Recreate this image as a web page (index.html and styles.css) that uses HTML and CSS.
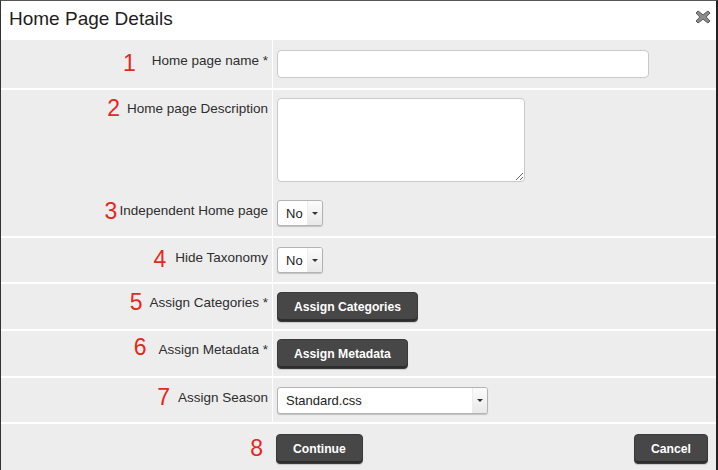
FILE: index.html
```html
<!DOCTYPE html>
<html lang="en">
<head>
<meta charset="utf-8">
<title>Home Page Details</title>
<link rel="stylesheet" href="styles.css">
</head>
<body>
<div class="dialog">
  <div class="header">
    <h1 class="title">Home Page Details</h1>
    <svg class="close" width="16" height="14" viewBox="0 0 16 14" aria-label="Close">
      <path d="M3 1 L8 4.8 L13 1 L15 3 L11.2 7 L15 11 L13 13 L8 9.2 L3 13 L1 11 L4.8 7 L1 3 Z" fill="#8c8c8c" stroke="#5a5a5a" stroke-width="1" stroke-linejoin="round"/>
    </svg>
  </div>

  <div class="row row-name">
    <div class="label"><span class="num n1">1</span><span class="text">Home page name *</span></div>
    <div class="field"><input class="input" type="text"></div>
  </div>

  <div class="row row-desc no-sep">
    <div class="label"><span class="num n2">2</span><span class="text">Home page Description</span></div>
    <div class="field"><textarea class="textarea"></textarea></div>
  </div>

  <div class="row row-indep">
    <div class="label"><span class="num n3">3</span><span class="text">Independent Home page</span></div>
    <div class="field">
      <div class="select select-sm"><span class="select-value">No</span><span class="select-arrow"></span></div>
    </div>
  </div>

  <div class="row row-tax">
    <div class="label"><span class="num n4">4</span><span class="text">Hide Taxonomy</span></div>
    <div class="field">
      <div class="select select-sm"><span class="select-value">No</span><span class="select-arrow"></span></div>
    </div>
  </div>

  <div class="row row-btn">
    <div class="label"><span class="num n5">5</span><span class="text">Assign Categories *</span></div>
    <div class="field"><button class="btn">Assign Categories</button></div>
  </div>

  <div class="row row-btn">
    <div class="label"><span class="num n6">6</span><span class="text">Assign Metadata *</span></div>
    <div class="field"><button class="btn">Assign Metadata</button></div>
  </div>

  <div class="row row-season">
    <div class="label"><span class="num n7">7</span><span class="text">Assign Season</span></div>
    <div class="field">
      <div class="select select-lg"><span class="select-value">Standard.css</span><span class="select-arrow"></span></div>
    </div>
  </div>

  <div class="footer">
    <div class="footer-lead"><span class="num n8">8</span></div>
    <button class="btn btn-continue">Continue</button>
    <button class="btn btn-cancel">Cancel</button>
  </div>
</div>
</body>
</html>
```

FILE: styles.css
```css
html, body {
  margin: 0;
  padding: 0;
  background: #fff;
}

.dialog {
  width: 718px;
  height: 470px;
  box-sizing: border-box;
  border-left: 1px solid #333;
  border-right: 2px solid #222;
  border-top: 1px solid #555;
  background: #ededed;
  overflow: hidden;
  font-family: "Liberation Sans", Arial, sans-serif;
  color: #333;
}

.header {
  height: 39px;
  box-sizing: border-box;
  background: #fff;
  display: flex;
  justify-content: space-between;
  align-items: flex-start;
  padding: 7px 5px 0 8px;
}

.title {
  margin: 0;
  font-size: 19px;
  line-height: 22px;
  font-weight: normal;
  color: #1e1e1e;
}

.close {
  margin-top: 2px;
  display: block;
}

.row {
  --pt: 10px;
  --pb: 10px;
  display: flex;
  border-bottom: 2px solid #fff;
}

.row.no-sep {
  border-bottom: 0;
}

.row-name { --pt: 10px; --pb: 10px; }
.row-desc { --pt: 8px; --pb: 8px; }
.row-indep { --pt: 10px; --pb: 10px; }
.row-tax { --pt: 9px; --pb: 9px; }
.row-btn { --pt: 8px; --pb: 7px; }
.row-season { --pt: 9px; --pb: 8px; }

.label {
  width: 272px;
  flex: none;
  box-sizing: border-box;
  border-right: 1px solid #fff;
  padding: calc(var(--pt) + 3px) 4px 0 0;
  display: flex;
  justify-content: flex-end;
  align-items: baseline;
}

.text {
  font-size: 13.5px;
  line-height: 16px;
  color: #2e2e2e;
}

.num {
  font-family: "Liberation Sans", Arial, sans-serif;
  font-size: 23px;
  line-height: 9px;
  color: #e4281d;
  position: relative;
}

.n1 { margin-right: 16px; top: 6px; }
.n2 { margin-right: 7px; top: 3px; }
.n3 { margin-right: 2px; top: 4px; }
.n4 { margin-right: 9px; top: 5px; }
.n5 { margin-right: 7px; top: 3px; }
.n6 { margin-right: 12px; top: 1px; }
.n7 { margin-right: 8px; top: 3px; }
.n8 { margin-right: 10px; line-height: 23px; top: -1px; }

.field {
  flex: 1;
  padding: var(--pt) 0 var(--pb) 4px;
  display: flex;
  align-items: flex-start;
}

.input {
  display: block;
  width: 372px;
  height: 28px;
  box-sizing: border-box;
  margin: 0;
  border: 1px solid #c9c9c9;
  border-radius: 4px;
  background: #fff;
  font: 13px "Liberation Sans", Arial, sans-serif;
}

.textarea {
  display: block;
  width: 248px;
  height: 84px;
  box-sizing: border-box;
  margin: 0;
  border: 1px solid #c9c9c9;
  border-radius: 4px;
  background: #fff;
  font: 13px "Liberation Sans", Arial, sans-serif;
}

.select {
  display: inline-flex;
  box-sizing: border-box;
  border: 1px solid #b3b3b3;
  border-radius: 3px;
  background: #fff;
  box-shadow: 0 1px 1px rgba(0, 0, 0, 0.18);
  font-size: 13px;
  color: #222;
  overflow: hidden;
}

.select-sm {
  width: 46px;
  height: 26px;
}

.select-lg {
  width: 211px;
  height: 27px;
}

.select-value {
  flex: 1;
  padding-left: 8px;
  display: flex;
  align-items: center;
}

.select-arrow {
  width: 14px;
  flex: none;
  background: linear-gradient(#fbfbfb, #e9e9e9);
  border-left: 1px solid #ececec;
  display: flex;
  align-items: center;
  justify-content: center;
}

.select-arrow::after {
  content: "";
  border-left: 3px solid transparent;
  border-right: 3px solid transparent;
  border-top: 3px solid #333;
}

.btn {
  height: 30px;
  padding: 0 16px;
  margin: 0;
  border: 1px solid #3a3a3a;
  border-radius: 4px;
  background: #474747;
  color: #fff;
  font-family: "Liberation Sans", Arial, sans-serif;
  font-weight: bold;
  font-size: 12.2px;
  box-shadow: inset 0 -2px 0 #2d2d2d, 0 1px 1px rgba(0, 0, 0, 0.15);
  cursor: pointer;
}

.footer {
  display: flex;
  align-items: center;
  padding: 10px 8px 0 0;
}

.footer-lead {
  width: 272px;
  flex: none;
  display: flex;
  justify-content: flex-end;
  align-items: center;
}

.btn-continue {
  margin-left: 3px;
}

.btn-cancel {
  margin-left: auto;
}
```
